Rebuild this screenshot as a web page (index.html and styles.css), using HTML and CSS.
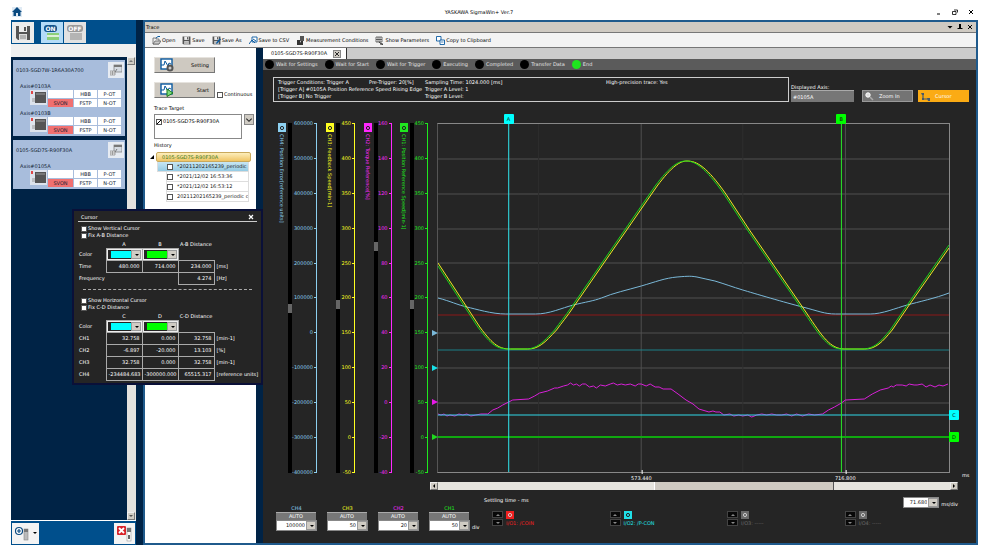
FILE: index.html
```html
<!DOCTYPE html>
<html lang="en">
<head>
  <meta charset="UTF-8" />
  <meta name="viewport" content="width=device-width, initial-scale=1.0" />
  <title>YASKAWA SigmaWin+ Ver.7</title>
  <link rel="stylesheet" href="styles.css">
</head>
<body>

  <!-- shared icons -->
  <svg class="defs" width="0" height="0">
    <symbol id="i-wave" viewBox="0 0 14 14">
      <rect x="1" y="1" width="11" height="10" fill="#fff" stroke="#0a5aa0" stroke-width="1.4"/>
      <path d="M1 7 L4 7 L5 3 L8 8 L9 5 L11 6" fill="none" stroke="#0a5aa0"/>
    </symbol>
    <symbol id="i-floppy" viewBox="0 0 16 16">
      <path d="M1 1 H15 V15 H3 L1 13 Z" fill="#555"/>
      <rect x="4" y="1" width="8" height="6" fill="#eee"/>
      <rect x="9" y="2" width="2" height="4" fill="#555"/>
      <rect x="4" y="9" width="8" height="6" fill="#ddd"/>
      <path d="M5 11 H11 M5 13 H11" stroke="#888"/>
    </symbol>
    <symbol id="i-eye" viewBox="0 0 8 8">
      <circle cx="4" cy="4" r="1.6" fill="none" stroke="currentColor"/>
    </symbol>
    <symbol id="i-motor" viewBox="0 0 17 15">
      <rect x="0" y="0" width="17" height="15" fill="#dde3ec"/>
      <rect x="1" y="1" width="2" height="3" fill="#e04848"/>
      <path d="M2 9 H6 M2 11 H6" stroke="#999"/>
      <rect x="5" y="2" width="11" height="11" fill="#555"/>
      <rect x="6" y="3" width="9" height="2" fill="#777"/>
    </symbol>
    <symbol id="i-props" viewBox="0 0 12 12">
      <rect x="4" y="1" width="8" height="7" fill="#d5dbe2" stroke="#777" stroke-width=".7"/>
      <path d="M4 2 H12" stroke="#777" stroke-width="2"/>
      <path d="M0 7 H5 V11 H0 Z M0 9 H5 M2.5 7 V11" fill="#eee" stroke="#888" stroke-width=".7"/>
      <path d="M5 8 L7 5" stroke="#777"/>
    </symbol>
  </svg>

  <header class="app-title">
    <svg class="home" viewBox="0 0 10 10"><path d="M5 0 L10 5 H8.500 V9 H6 V6 H4 V9 H1.500 V5 H0 Z" fill="#0a4a80"/></svg>
    <h1>YASKAWA SigmaWin+ Ver.7</h1>
    <div class="win-buttons">
      <button aria-label="Minimize"><svg viewBox="0 0 6 6"><path d="M1 5 H4" stroke="#000"/></svg></button>
      <button aria-label="Restore"><svg viewBox="0 0 6 6"><path d="M2 1 H5.500 V3.500 M.5 2.500 H4 V5.500 H.5 Z" fill="none" stroke="#000" stroke-width=".8"/></svg></button>
      <button aria-label="Close"><svg viewBox="0 0 6 6"><path d="M1 1 L5 5 M5 1 L1 5" stroke="#000"/></svg></button>
    </div>
  </header>

  <main class="app">

    <aside class="sidebar">
      <div class="side-tools">
        <button class="tile" aria-label="Save project"><svg viewBox="0 0 16 16"><use href="#i-floppy"/></svg></button>
        <button class="tile on"><span>ON</span><i></i></button>
        <button class="tile off"><span>OFF</span><i></i></button>
      </div>
      <div class="side-strip"></div>
      <div class="side-body">
        <div class="devices">
          <section class="device">
            <div class="device-head">
              <h2>0103-SGD7W-1R6A30A700</h2>
              <button aria-label="Properties"><svg viewBox="0 0 12 12"><use href="#i-props"/></svg></button>
            </div>
            <h3>Axis#0103A</h3>
            <div class="axis">
              <svg viewBox="0 0 17 15"><use href="#i-motor"/></svg>
              <span></span><span>HBB</span><span>P-OT</span>
              <span class="alarm">SVON</span><span>FSTP</span><span>N-OT</span>
            </div>
            <h3>Axis#0103B</h3>
            <div class="axis">
              <svg viewBox="0 0 17 15"><use href="#i-motor"/></svg>
              <span></span><span>HBB</span><span>P-OT</span>
              <span class="alarm">SVON</span><span>FSTP</span><span>N-OT</span>
            </div>
          </section>
          <section class="device">
            <div class="device-head">
              <h2>0105-SGD7S-R90F30A</h2>
              <button aria-label="Properties"><svg viewBox="0 0 12 12"><use href="#i-props"/></svg></button>
            </div>
            <h3>Axis#0105A</h3>
            <div class="axis">
              <svg viewBox="0 0 17 15"><use href="#i-motor"/></svg>
              <span></span><span>HBB</span><span>P-OT</span>
              <span class="alarm">SVON</span><span>FSTP</span><span>N-OT</span>
            </div>
          </section>
        </div>
        <div class="vscroll">
          <button aria-label="Scroll up"><svg viewBox="0 0 6 6"><path d="M1 4 L3 2 L5 4 Z" fill="#777"/></svg></button>
          <button aria-label="Scroll down"><svg viewBox="0 0 6 6"><path d="M1 2 L3 4 L5 2 Z" fill="#555"/></svg></button>
        </div>
      </div>
      <div class="side-foot">
        <button class="add" aria-label="Add device">
          <svg viewBox="0 0 27 21">
            <circle cx="7" cy="8" r="3.500" fill="#fff" stroke="#0a4a80" stroke-width="1.200"/>
            <path d="M7 6 V10 M5 8 H9" stroke="#0a4a80" stroke-width="1.200"/>
            <rect x="12" y="6" width="4" height="11" fill="#bbb" stroke="#888" stroke-width=".6"/>
            <rect x="12" y="6" width="4" height="3" fill="#777"/>
            <path d="M21 9 H25 L23 11 Z" fill="#000"/>
          </svg>
        </button>
        <button class="remove" aria-label="Remove device">
          <svg viewBox="0 0 21 21">
            <rect x="13" y="5" width="4" height="13" fill="#fff" stroke="#999" stroke-width=".6"/>
            <rect x="13" y="5" width="4" height="4" fill="#777"/>
            <path d="M15 12 V16" stroke="#000" stroke-width="1.200"/>
            <rect x="3" y="3" width="9" height="9" rx="1" fill="#d8232a"/>
            <path d="M5 5 L10 10 M10 5 L5 10" stroke="#fff" stroke-width="1.800"/>
          </svg>
        </button>
      </div>
    </aside>

    <section class="trace">
      <div class="trace-title">
        <h2>Trace</h2>
        <div class="win-buttons">
          <button aria-label="Window menu"><svg viewBox="0 0 6 6"><path d="M.5 2 H5.500 L3 4.500 Z"/></svg></button>
          <button aria-label="Pin"><svg viewBox="0 0 6 6"><path d="M2 0 H4 V4 H5.500 V5 H.5 V4 H2 Z"/></svg></button>
          <button aria-label="Close trace"><svg viewBox="0 0 6 6"><path d="M1 1 L5 5 M5 1 L1 5" stroke="#000"/></svg></button>
        </div>
      </div>

      <nav class="toolbar">
        <button><svg viewBox="0 0 9 9"><path d="M1 8 V2 H4 V3 H7 V8 Z" fill="#eee" stroke="#666" stroke-width=".8"/><path d="M1 8 L3 5 H9 L7 8 Z" fill="#ccc" stroke="#555" stroke-width=".7"/><path d="M4 2 L6 .5 H8" fill="none" stroke="#0a5aa0"/></svg>Open</button>
        <button><svg viewBox="0 0 16 16"><use href="#i-floppy"/></svg>Save</button>
        <button><svg viewBox="0 0 16 16"><use href="#i-floppy"/><path d="M8 11 L14 4 L16 6 L10 13 L7 14 Z" fill="#0a5aa0"/></svg>Save As</button>
        <button><svg viewBox="0 0 9 9"><path d="M3 1 H8 V6 H3 Z" fill="#fff" stroke="#0a5aa0" stroke-width=".9"/><path d="M0 8 L3 4 L6 7 M4 3 L7 5" fill="none" stroke="#0a5aa0"/></svg>Save to CSV</button>
        <button><svg viewBox="0 0 9 9"><path d="M4 0 H8 V5 H4 Z" fill="#555"/><path d="M1 4 H4 V9 H1 Z M5 5 H7 V9 H3 Z" fill="#333"/></svg>Measurement Conditions</button>
        <button><svg viewBox="0 0 9 9"><path d="M1 1 H7 V6 H1 Z M1 3.500 H7 M3 1 V6 M5 1 V6" fill="#fff" stroke="#333" stroke-width=".7"/><path d="M4 6 L8 9 M5 8 H8" stroke="#333"/></svg>Show Parameters</button>
        <button><svg viewBox="0 0 9 9"><path d="M.5 .5 H5 V5 H.5 Z" fill="#fff" stroke="#0a5aa0" stroke-width=".9"/><path d="M4 4 H8.500 V8.500 H4 Z" fill="#fff" stroke="#0a5aa0" stroke-width=".9"/><path d="M5 6 H7.500" stroke="#0a5aa0" stroke-width=".7"/></svg>Copy to Clipboard</button>
      </nav>

      <div class="trace-body">

        <div class="side-panel">
          <button class="big-btn">
            <svg viewBox="0 0 14 14"><use href="#i-wave"/><circle cx="10" cy="10" r="2.500" fill="#ccc" stroke="#555" stroke-width="2"/></svg>
            <span>Setting</span>
          </button>
          <div class="start-row">
            <button class="big-btn">
              <svg viewBox="0 0 14 14"><use href="#i-wave"/><path d="M7 6 L13 10 L7 13.500 Z" fill="#7ddc7d" stroke="#187a18"/></svg>
              <span>Start</span>
            </button>
            <label class="check"><input type="checkbox">Continuous</label>
          </div>
          <h3>Trace Target</h3>
          <div class="target-row">
            <div class="target-box"><label class="check"><input type="checkbox" checked>0105-SGD7S-R90F30A</label></div>
            <button class="drop" aria-label="Choose target"><svg viewBox="0 0 6 6"><path d="M1 2 L3 4 L5 2" fill="none" stroke="#222" stroke-width=".8"/></svg></button>
          </div>
          <h3>History</h3>
          <div class="tree">
            <svg class="expander" viewBox="0 0 4 4"><path d="M4 0 V4 H0 Z"/></svg>
            <div class="tree-root">0105-SGD7S-R90F30A</div>
            <ul>
              <li class="selected"><label class="check"><input type="checkbox">*20211202165239_periodic</label></li>
              <li><label class="check"><input type="checkbox">*2021/12/02 16:53:36</label></li>
              <li><label class="check"><input type="checkbox">*2021/12/02 16:53:12</label></li>
              <li><label class="check"><input type="checkbox">20211202165239_periodic c</label></li>
            </ul>
          </div>
        </div>

        <div class="viewer">
          <div class="tabs">
            <div class="tab">0105-SGD7S-R90F30A <button aria-label="Close tab"><svg viewBox="0 0 6 6"><path d="M1 1 L5 5 M5 1 L1 5" stroke="#000" stroke-width=".8"/></svg></button></div>
          </div>
          <ul class="steps">
            <li>Wait for Settings</li>
            <li>Wait for Start</li>
            <li>Wait for Trigger</li>
            <li>Executing</li>
            <li>Completed</li>
            <li>Transfer Data</li>
            <li class="active">End</li>
          </ul>

          <div class="info-row">
            <div class="conditions">
              <span>Trigger Conditions: Trigger A</span><span>Pre-Trigger: 20[%]</span><span>Sampling Time: 1024.000 [ms]</span><span>High-precision trace: Yes</span>
              <span class="wide">[Trigger A] #0105A Position Reference Speed Rising Edge</span><span class="level">Trigger A Level: 1</span>
              <span class="wide">[Trigger B] No Trigger</span><span class="level">Trigger B Level:</span>
            </div>
            <div class="field">
              <label for="axis">Displayed Axis:</label>
              <input id="axis" type="text" value="#0105A" readonly>
            </div>
            <button class="view-btn">
              <svg viewBox="0 0 9 9"><circle cx="3" cy="3" r="2.200" fill="#ddd" stroke="#fff"/><path d="M5 5 L8 8" stroke="#aaa" stroke-width="1.500"/></svg>Zoom In
            </button>
            <button class="view-btn active">
              <svg viewBox="0 0 9 9"><path d="M2 1 V7 H8" fill="none" stroke="#4a5a68" stroke-width="1.200"/><path d="M0 1 H3 V3 H1 Z M6 6 H9 V9 H7 Z M1 6 H3 V8 H1 Z" fill="#4a5a68"/></svg>Cursor
            </button>
          </div>

          <div class="chart">
            <div class="channel ch4">
              <div class="name"><button aria-label="Toggle CH4"><svg viewBox="0 0 8 8"><use href="#i-eye"/></svg></button><span>CH4: Position Error[reference units]</span></div>
              <input type="range" aria-label="CH4 position" value="53">
              <ol><li>600000</li><li>500000</li><li>400000</li><li>300000</li><li>200000</li><li>100000</li><li>0</li><li>-100000</li><li>-200000</li><li>-300000</li><li>-400000</li></ol>
            </div>
            <div class="channel ch3">
              <div class="name"><button aria-label="Toggle CH3"><svg viewBox="0 0 8 8"><use href="#i-eye"/></svg></button><span>CH3: Feedback Speed[min-1]</span></div>
              <input type="range" aria-label="CH3 position" value="52">
              <ol><li>450</li><li>400</li><li>350</li><li>300</li><li>250</li><li>200</li><li>150</li><li>100</li><li>50</li><li>0</li><li>-50</li></ol>
            </div>
            <div class="channel ch2">
              <div class="name"><button aria-label="Toggle CH2"><svg viewBox="0 0 8 8"><use href="#i-eye"/></svg></button><span>CH2: Torque Reference[%]</span></div>
              <input type="range" aria-label="CH2 position" value="35">
              <ol><li>160</li><li>140</li><li>120</li><li>100</li><li>80</li><li>60</li><li>40</li><li>20</li><li>0</li><li>-20</li><li>-40</li></ol>
            </div>
            <div class="channel ch1">
              <div class="name"><button aria-label="Toggle CH1"><svg viewBox="0 0 8 8"><use href="#i-eye"/></svg></button><span>CH1: Position Reference Speed[min-1]</span></div>
              <input type="range" aria-label="CH1 position" value="52">
              <ol><li>450</li><li>400</li><li>350</li><li>300</li><li>250</li><li>200</li><li>150</li><li>100</li><li>50</li><li>0</li><li>-50</li></ol>
            </div>

            <div class="plot">
              <svg class="curves" viewBox="0 0 513 348" preserveAspectRatio="none">
                <path class="grid" d="M0 35 H513 M0 70 H513 M0 105 H513 M0 139 H513 M0 174 H513 M0 209 H513 M0 244 H513 M0 279 H513 M204 0 V348 M409 0 V348"/>
                <path class="grid faint" d="M101 0 V348 M306 0 V348"/>
                <path class="io1" d="M0 191 H513"/>
                <path class="io2" d="M0 226 H513"/>
                <path class="s4" d="M0 174 C12 177 20 181 29 183 S54 190 68 190 H98 C112 190 124 184 136 181 S156 177 164 174 C176 169 190 166 204 162 S228 154 240 153 S254 152 260 153 S272 156 278 157 C288 160 296 163 306 166 S350 179 366 183 S388 190 399 190 H434 C446 190 460 184 471 181 S500 174 513 169"/>
                <path class="s2" d="M0 290 L3 291 L6 290 L9 292 L12 291 L17 292 L21 290 L25 291 L29 290 L33 292 L38 291 L43 290 L50 290 L55 286 L60 284 L65 281 L71 278 L75 276 L91 275 L97 272 L102 269 L110 267 L117 264 L120 264 L126 262 L130 261 L133 259 L136 261 L139 260 L142 262 L145 260 L148 260 L152 263 L156 262 L159 264 L163 261 L168 262 L173 260 L176 259 L180 261 L184 260 L188 261 L193 260 L198 262 L201 260 L204 260 L209 262 L213 260 L218 263 L222 263 L226 265 L234 265 L241 270 L249 276 L256 280 L262 285 L272 288 L276 287 L279 288 L283 288 L287 291 L293 290 L297 292 L302 291 L306 292 L311 291 L315 293 L320 291 L325 290 L330 291 L335 290 L340 291 L345 291 L350 290 L355 292 L360 290 L366 292 L372 290 L378 291 L386 290 L392 286 L398 283 L405 279 L409 276 L428 275 L436 270 L444 266 L452 264 L455 262 L457 263 L460 261 L466 261 L470 262 L473 260 L478 261 L481 261 L486 260 L490 263 L494 261 L499 263 L503 261 L507 262 L512 260"/>
                <path class="s3" d="M0 139 L42 203 C56 222 62 225 73 225 H90 C101 225 107 219 119 206 C124 199 130 192 136 183 L204 85 L220 62 C235 42 243 37 250 37 C260 37 270 43 289 70 L312 105 L370 189 C386 213 394 225 408 225 H428 C440 225 446 218 456 206 L471 184 L513 124"/>
                <path class="s1" d="M0 142 L40 203 C54 222 60 225 71 225 H88 C99 225 105 219 117 206 C122 199 128 192 134 183 L202 85 L218 62 C233 42 241 37 249 37 C258 37 268 43 287 70 L310 105 L368 189 C384 213 392 225 406 225 H426 C438 225 444 218 454 206 L469 184 L513 121"/>
                <path class="cur-c" d="M0 291 H513"/>
                <path class="cur-d" d="M0 313 H513"/>
                <path class="cur-a" d="M71 0 V348"/>
                <path class="cur-b" d="M405 0 V348"/>
              </svg>
              <!-- cursor handles -->
              <span class="tag top a" style="left:13.8%">A</span>
              <span class="tag top b" style="left:78.9%">B</span>
              <span class="tag right a" style="top:83.5%">C</span>
              <span class="tag right b" style="top:90%">D</span>
              <i class="zero z4" style="top:60%"></i>
              <i class="zero zc" style="top:70%"></i>
              <i class="zero z2" style="top:80%"></i>
              <i class="zero z1" style="top:90%"></i>
              <span class="time" style="left:39.8%">573.440</span>
              <span class="time" style="left:79.7%">716.800</span>
              <span class="unit">ms</span>
            </div>
          </div>

          <div class="hscroll">
            <button aria-label="Scroll left"><svg viewBox="0 0 6 6"><path d="M4 1 V5 L2 3 Z"/></svg></button>
            <div class="track"><div class="thumb"></div></div>
            <button aria-label="Scroll right"><svg viewBox="0 0 6 6"><path d="M2 1 V5 L4 3 Z"/></svg></button>
          </div>

          <div class="controls">
            <div class="scales">
              <div class="scale ch4"><label for="d4">CH4</label><button>AUTO</button><div class="combo"><select id="d4"><option>100000</option></select></div></div>
              <div class="scale ch3"><label for="d3">CH3</label><button>AUTO</button><div class="combo"><select id="d3"><option>50</option></select></div></div>
              <div class="scale ch2"><label for="d2">CH2</label><button>AUTO</button><div class="combo"><select id="d2"><option>20</option></select></div></div>
              <div class="scale ch1"><label for="d1">CH1</label><button>AUTO</button><div class="combo"><select id="d1"><option>50</option></select></div></div>
              <span class="div">div</span>
            </div>
            <div class="right-controls">
              <div class="settling">
                <span>Settling time - ms</span>
                <div class="time-div"><div class="combo"><select id="td"><option>71.680</option></select></div><label for="td">ms/div</label></div>
              </div>
              <div class="ios">
                <div class="io one">
                  <button class="up" aria-label="I/O1 up"></button><button class="eye" aria-label="Toggle I/O1"><svg viewBox="0 0 8 8"><use href="#i-eye"/></svg></button>
                  <button class="down" aria-label="I/O1 down"></button><span>I/O1: /COIN</span>
                </div>
                <div class="io two">
                  <button class="up" aria-label="I/O2 up"></button><button class="eye" aria-label="Toggle I/O2"><svg viewBox="0 0 8 8"><use href="#i-eye"/></svg></button>
                  <button class="down" aria-label="I/O2 down"></button><span>I/O2: /P-CON</span>
                </div>
                <div class="io">
                  <button class="up" aria-label="I/O3 up"></button><button class="eye" aria-label="Toggle I/O3"><svg viewBox="0 0 8 8"><use href="#i-eye"/></svg></button>
                  <button class="down" aria-label="I/O3 down"></button><span>I/O3: -----</span>
                </div>
                <div class="io">
                  <button class="up" aria-label="I/O4 up"></button><button class="eye" aria-label="Toggle I/O4"><svg viewBox="0 0 8 8"><use href="#i-eye"/></svg></button>
                  <button class="down" aria-label="I/O4 down"></button><span>I/O4: -----</span>
                </div>
              </div>
            </div>
          </div>
        </div>
      </div>
    </section>
  </main>

  <div class="dialog" role="dialog" aria-label="Cursor">
    <div class="dialog-title"><h2>Cursor</h2><button aria-label="Close cursor window"><svg viewBox="0 0 6 6"><path d="M1 1 L5 5 M5 1 L1 5" stroke="#fff" stroke-width="1.200"/></svg></button></div>
    <div class="checks">
      <label class="check"><input type="checkbox">Show Vertical Cursor</label>
      <label class="check"><input type="checkbox">Fix A-B Distance</label>
    </div>
    <table>
      <tr class="head"><td></td><th>A</th><th>B</th><th>A-B Distance</th><td></td></tr>
      <tr class="color"><th>Color</th><td><div class="combo"><select class="cyan" aria-label="Cursor A color"><option></option></select></div></td><td><div class="combo"><select class="green" aria-label="Cursor B color"><option></option></select></div></td><td class="none"></td><td></td></tr>
      <tr><th>Time</th><td>480.000</td><td>714.000</td><td>234.000</td><td>[ms]</td></tr>
      <tr><th colspan="3">Frequency</th><td>4.274</td><td>[Hz]</td></tr>
    </table>
    <hr>
    <div class="checks">
      <label class="check"><input type="checkbox">Show Horizontal Cursor</label>
      <label class="check"><input type="checkbox">Fix C-D Distance</label>
    </div>
    <table>
      <tr class="head"><td></td><th>C</th><th>D</th><th>C-D Distance</th><td></td></tr>
      <tr class="color"><th>Color</th><td><div class="combo"><select class="cyan" aria-label="Cursor C color"><option></option></select></div></td><td><div class="combo"><select class="green" aria-label="Cursor D color"><option></option></select></div></td><td class="none"></td><td></td></tr>
      <tr><th>CH1</th><td>32.758</td><td>0.000</td><td>32.758</td><td>[min-1]</td></tr>
      <tr><th>CH2</th><td>-6.897</td><td>-20.000</td><td>13.103</td><td>[%]</td></tr>
      <tr><th>CH3</th><td>32.758</td><td>0.000</td><td>32.758</td><td>[min-1]</td></tr>
      <tr><th>CH4</th><td>-234484.683</td><td>-300000.000</td><td>65515.317</td><td>[reference units]</td></tr>
    </table>
  </div>

</body>
</html>
```
FILE: styles.css
```css
* {
  box-sizing: border-box;
}
body {
  margin: 0;
  min-height: 100vh;
  display: flex;
  flex-direction: column;
  background: #fff;
  color: #000;
  font: 5px/7px "DejaVu Sans", "Liberation Sans", sans-serif;
}
h1, h2, h3, ul, ol {
  margin: 0;
  padding: 0;
  font: inherit;
  list-style: none;
}
button, input, select {
  margin: 0;
  padding: 0;
  border: 0;
  border-radius: 0;
  font: inherit;
  color: inherit;
  background: none;
}
svg {
  display: block;
}
.defs {
  position: absolute;
}

/* title bar */
.app-title {
  display: flex;
  align-items: center;
  height: 20px;
  padding: 4px 4px 0 1px;
  margin: 0 11px;
}
.home {
  width: 10px;
  height: 10px;
  background: #dfeaf4;
}
.app-title h1 {
  flex: 1;
  padding-right: 8px;
  text-align: center;
}
.win-buttons {
  display: flex;
  gap: 10px;
}
.win-buttons svg {
  width: 6px;
  height: 6px;
}
.app-title h1 {
  padding: 0;
}

.app {
  flex: 1;
  display: flex;
  margin: 0 11px 9px;
  background: #002346;
}

/* device list */
.sidebar {
  display: flex;
  flex-direction: column;
  width: 125px;
  margin-right: 7px;
  color: #123;
}
.side-tools, .side-foot {
  display: flex;
  height: 24px;
  padding: 2px 1px;
  background: #004f8c;
}
.tile {
  width: 22px;
  height: 21px;
  padding: 2px;
  background: #ececec;
}
.tile svg {
  width: 16px;
  height: 16px;
  margin: auto;
}
.tile span {
  display: block;
  width: 13px;
  margin: 0 0 1px 1px;
  border-radius: 3px;
  background: #14548c;
  color: #fff;
  font-size: 6px;
  font-weight: bold;
  line-height: 7px;
}
.tile i {
  display: block;
  width: 12px;
  height: 7px;
  margin-left: 4px;
  background: linear-gradient(#8ccf7a 2px, #dff0d8 2px 4px, #8ccf7a 4px);
}
.tile.on {
  margin-left: 7px;
  background: #b5dcf8;
}
.tile.off {
  margin-left: 1px;
  background: #e2e2e2;
}
.tile.off span {
  width: 16px;
  background: #999;
}
.tile.off i {
  background: #b4b4b4;
}
.side-strip {
  height: 13px;
  background: #f0f0f0;
}
.side-body {
  flex: 1;
  display: flex;
  border-bottom: 1px solid #fff;
}
.devices {
  flex: 1;
  padding: 3px 2px;
}
.device {
  margin-bottom: 4px;
  padding: 2px 1px 2px 3px;
  background: #a8bddc;
}
.device-head {
  display: flex;
  justify-content: space-between;
  align-items: center;
  height: 16px;
}
.device-head + h3 {
  margin-top: 5px;
}
.device-head button {
  width: 16px;
  height: 16px;
  padding: 2px;
  background: #e6ebf2;
}
.device h3 {
  margin-left: 4px;
}
.axis {
  display: grid;
  grid-template-columns: 17px 25px 23px 23px;
  grid-auto-rows: 8px;
  gap: 1px;
  justify-content: end;
  margin: 0 3px 3px 0;
  line-height: 8px;
  text-align: center;
}
.axis:last-child {
  margin-bottom: 0;
}
.axis svg {
  grid-row: span 2;
  width: 17px;
  height: 15px;
}
.axis span {
  background: #fff;
}
.axis .alarm {
  background: #f07070;
}
.vscroll {
  display: flex;
  flex-direction: column;
  justify-content: space-between;
  width: 9px;
  background: #e4e2de;
}
.vscroll button, .hscroll button {
  width: 8px;
  height: 8px;
  background: #d0ccc4;
  border: 1px solid;
  border-color: #eee #777 #777 #eee;
}
.side-foot {
  justify-content: space-between;
}
.side-foot button {
  height: 21px;
  background: #f4f4f4;
}
.side-foot svg {
  height: 21px;
}
.add {
  width: 27px;
}
.remove {
  width: 21px;
}

/* trace window */
.trace {
  flex: 1;
  display: flex;
  flex-direction: column;
  min-width: 0;
  border: 2px solid #1f5a8c;
}
.trace-title {
  display: flex;
  justify-content: space-between;
  align-items: center;
  height: 10px;
  padding: 0 3px 0 1px;
  background: #cfcac2;
}
.trace-title .win-buttons {
  gap: 4px;
}
.toolbar {
  display: flex;
  align-items: center;
  gap: 7px;
  height: 16px;
  padding: 0 7px;
  background: #f3f3f3;
  border-top: 1px solid #777;
  border-bottom: 1px solid #777;
}
.toolbar button {
  display: flex;
  align-items: center;
  gap: 1px;
  white-space: nowrap;
}
.toolbar svg {
  width: 9px;
  height: 9px;
}
.trace-body {
  flex: 1;
  display: flex;
  gap: 7px;
}
.side-panel {
  width: 111px;
  padding: 9px 2px 0 9px;
  background: #fff;
}
.big-btn {
  display: flex;
  align-items: center;
  width: 61px;
  height: 16px;
  padding: 0 5px;
  background: #cec9c1;
  border: 1px solid;
  border-color: #e6e3de #777 #777 #e6e3de;
}
.big-btn svg {
  width: 14px;
  height: 14px;
}
.big-btn span {
  flex: 1;
  text-align: right;
}
.start-row {
  display: flex;
  align-items: flex-end;
  gap: 2px;
  margin: 9px 0 7px;
}
.check {
  display: flex;
  align-items: center;
  gap: 1px;
  white-space: nowrap;
}
.check input {
  appearance: none;
  flex: none;
  width: 6px;
  height: 6px;
  background: #fff;
  border: 1px solid #555;
}
.check input:checked {
  background: #fff linear-gradient(135deg, transparent 40%, #000 40% 60%, transparent 60%);
}
.target-row {
  display: flex;
  gap: 2px;
  margin: 2px 0 3px;
}
.target-box {
  width: 88px;
  height: 25px;
  padding: 3px 1px;
  border: 1px solid #888;
}
.drop {
  width: 10px;
  height: 11px;
  background: #d0ccc4;
  border: 1px solid #888;
}
.tree {
  position: relative;
  margin: 3px 3px 0 2px;
  color: #222;
}
.expander {
  position: absolute;
  left: -6px;
  top: 3px;
  width: 4px;
  height: 4px;
}
.tree-root {
  height: 10px;
  padding-left: 5px;
  line-height: 8px;
  color: #3a7a1c;
  background: linear-gradient(#fdeebb, #f0c565);
  border: 1px solid #c9a95c;
  border-radius: 2px;
}
.tree li {
  height: 10px;
  margin: 0 2px 0 10px;
  overflow: hidden;
  border: 1px solid #ddd;
  border-top: 0;
}
.tree li .check {
  gap: 4px;
  height: 9px;
}
.tree li.selected {
  margin-left: 1px;
  padding-left: 9px;
  background: linear-gradient(#c8e6f4, #94cbe4);
}

/* viewer */
.viewer {
  flex: 1;
  display: flex;
  flex-direction: column;
  min-width: 0;
  background: #252525;
  color: #fff;
}
.tabs {
  height: 11px;
  background: #ccc;
}
.tab {
  display: flex;
  align-items: center;
  justify-content: space-between;
  width: 84px;
  height: 11px;
  padding: 0 5px 0 8px;
  background: #fff;
  color: #111;
  border-right: 1px solid #333;
}
.tab button {
  width: 8px;
  height: 8px;
  background: #d0ccc4;
  border: 1px solid #888;
}
.steps {
  display: flex;
  gap: 7px;
  height: 11px;
  padding-left: 2px;
  line-height: 11px;
  background: #5b5b5b;
  color: #e4e4e4;
}
.steps li {
  display: flex;
  align-items: center;
  gap: 2px;
}
.steps li::before {
  content: "";
  width: 9px;
  height: 9px;
  border-radius: 50%;
  background: #000;
}
.steps .active::before {
  background: #1ee61e;
}
.info-row {
  display: flex;
  align-items: flex-end;
  margin: 7px 7px 0 10px;
}
.conditions {
  flex: 1;
  display: grid;
  grid-template-columns: 91px 56px 181px 1fr;
  padding: 1px 4px;
  border: 1px solid #ccc;
  white-space: nowrap;
}
.conditions .wide {
  grid-column: span 2;
}
.conditions .level {
  grid-column: span 2;
}
.field {
  width: 63px;
  margin: 0 8px 0 2px;
}
.field label {
  display: block;
  line-height: 6px;
}
.field input {
  display: block;
  width: 100%;
  height: 12px;
  padding: 0 2px;
  background: #777;
  border-top: 1px solid #aaa;
}
.view-btn {
  display: flex;
  align-items: center;
  gap: 5px;
  width: 51px;
  height: 12px;
  padding: 0 2px;
  background: #747474;
  border: 1px solid #999;
}
.view-btn svg {
  width: 9px;
  height: 9px;
}
.view-btn.active {
  margin-left: 5px;
  background: #fbab14;
  border-color: #fbab14;
}

/* chart */
.ch1 { color: #1fe81f; }
.ch2 { color: #ff28ff; }
.ch3 { color: #ffff20; }
.ch4 { color: #8cd0f0; }

.chart {
  flex: 1;
  display: grid;
  grid-template-columns: 39px 29px 27px 28px 1fr;
  column-gap: 9px;
  min-height: 240px;
  margin: 21px 26px 9px 15px;
}
.channel {
  display: flex;
  contain: size;
}
.name {
  display: flex;
  flex-direction: column;
  width: 8px;
}
.name button {
  width: 8px;
  height: 9px;
  background: currentColor;
}
.name svg {
  width: 8px;
  height: 8px;
  color: #222;
}
.name span {
  margin-top: 2px;
  writing-mode: vertical-rl;
  line-height: 8px;
  white-space: nowrap;
}
.channel input {
  appearance: none;
  writing-mode: vertical-lr;
  width: 4px;
  height: 100%;
  margin-left: 2px;
  background: #000;
}
.channel input::-webkit-slider-thumb {
  appearance: none;
  width: 4px;
  height: 9px;
  background: #666;
}
.channel ol {
  flex: 1;
  display: flex;
  flex-direction: column;
  justify-content: space-between;
  text-align: right;
  border-right: 1px solid;
}
.channel li {
  display: flex;
  justify-content: flex-end;
  gap: 1px;
  height: 1px;
  line-height: 1px;
}
.channel li::after {
  content: "";
  width: 2px;
  height: 1px;
  background: currentColor;
}
.plot {
  position: relative;
  border: 1px solid #888;
  border-left-color: #555;
}
.curves {
  position: absolute;
  width: 100%;
  height: 100%;
}
.curves path {
  fill: none;
  stroke-width: 1px;
  vector-effect: non-scaling-stroke;
}
.curves .grid { stroke: #505050; }
.curves .faint { stroke: #2e2e2e; }
.curves .io1 { stroke: #8c1818; }
.curves .io2 { stroke: #1c8088; }
.curves .s1 { stroke: #18d818; }
.curves .s2 { stroke: #d820d8; }
.curves .s3 { stroke: #f0f020; }
.curves .s4 { stroke: #7ab8d8; }
.curves .cur-a { stroke: #30e8f0; }
.curves .cur-b { stroke: #28e828; }
.curves .cur-c { stroke: #30d8e8; }
.curves .cur-d {
  stroke: #10a810;
  stroke-width: 2px;
}
.tag {
  position: absolute;
  width: 10px;
  height: 10px;
  border-radius: 1px;
  color: #111;
  line-height: 10px;
  text-align: center;
}
.tag.top {
  bottom: 100%;
  margin-left: -5px;
}
.tag.right {
  left: 100%;
  margin-top: -5px;
}
.tag.a { background: #00ffff; }
.tag.b { background: #00ff00; }
.zero {
  position: absolute;
  right: 100%;
  margin-top: -3px;
  border: 3px solid transparent;
  border-left: 6px solid;
  border-right: 0;
}
.z4 { color: #7ab8d8; }
.zc { color: #18e0e8; }
.z2 { color: #e619e6; }
.z1 { color: #1fd81f; }
.time {
  position: absolute;
  top: 100%;
  padding-top: 3px;
  transform: translateX(-50%);
}
.time::before {
  content: "";
  position: absolute;
  left: 50%;
  top: -2px;
  height: 4px;
  border-left: 1px solid #fff;
}
.unit {
  position: absolute;
  left: 100%;
  top: 100%;
  margin-left: 13px;
}
.hscroll {
  display: flex;
  height: 8px;
  margin: 0 18px 0 167px;
}
.track {
  flex: 1;
  padding: 0 22% 0 41%;
  background: #e6e4de;
}
.thumb {
  height: 8px;
  background: #cfcac2;
  border-left: 1px solid #fff;
  border-right: 1px solid #555;
}

/* controls under the chart */
.controls {
  display: flex;
  align-items: flex-end;
  padding: 7px 14px 12px 13px;
}
.scales {
  display: flex;
  align-items: flex-end;
  gap: 10px;
  width: 201px;
}
.scale {
  flex: none;
  width: 41px;
  text-align: center;
}
.scale label {
  display: block;
  line-height: 8px;
}
.scale button {
  display: block;
  width: 40px;
  height: 8px;
  line-height: 7px;
  background: #777;
  border-top: 1px solid #aaa;
  color: #fff;
}
.combo {
  position: relative;
}
.combo select {
  appearance: none;
  display: block;
  width: 100%;
  height: 11px;
  padding: 0 11px 0 2px;
  background: #fff;
  border: 1px solid #888;
  color: #111;
  text-align-last: right;
}
.combo::after {
  content: "";
  position: absolute;
  top: 1px;
  right: 1px;
  bottom: 1px;
  width: 8px;
  background: #d0ccc4;
  border: 1px solid #999;
  pointer-events: none;
}
.combo::before {
  content: "";
  position: absolute;
  z-index: 1;
  right: 3px;
  top: 5px;
  border: 2px solid transparent;
  border-top-color: #000;
  border-bottom: 0;
  pointer-events: none;
}
.div {
  margin-left: -8px;
}
.right-controls {
  flex: 1;
  margin-left: 7px;
}
.settling, .time-div {
  display: flex;
  justify-content: space-between;
}
.time-div {
  gap: 2px;
  align-items: flex-end;
  margin-right: 4px;
}
.time-div .combo {
  width: 36px;
}
.ios {
  display: grid;
  grid-template-columns: repeat(4, 1fr);
  margin: 3px 0 4px 8px;
}
.io {
  display: grid;
  grid-template-columns: 11px 1fr;
  grid-auto-rows: 8px;
  column-gap: 3px;
  color: #6a6a6a;
  line-height: 8px;
}
.up, .down {
  display: grid;
  place-items: center;
  height: 7px;
  background: #080808;
  border: 1px solid #444;
}
.up::before, .down::before {
  content: "";
  border: 2px solid transparent;
  border-top: 0;
  border-bottom-color: #888;
}
.down::before {
  transform: rotate(180deg);
}
.eye {
  width: 8px;
  height: 8px;
  background: currentColor;
}
.eye svg {
  color: #ccc;
}
.io.one { color: #f02020; }
.io.two { color: #20e0e8; }
.io.two svg { color: #222; }

/* floating cursor window */
.dialog {
  position: absolute;
  left: 72px;
  top: 209px;
  width: 191px;
  padding: 2px 4px;
  background: #252525;
  border: 2px solid #0a1038;
  color: #fff;
}
.dialog-title {
  display: flex;
  justify-content: space-between;
  align-items: center;
  height: 9px;
  padding: 0 3px;
  border-bottom: 1px solid #ccc;
}
.dialog-title svg {
  width: 6px;
  height: 6px;
}
.checks {
  margin: 3px 0 2px 3px;
}
.checks .check {
  height: 7px;
}
.dialog table {
  border-collapse: collapse;
  table-layout: fixed;
  width: 100%;
}
.dialog td, .dialog th {
  width: 36px;
  height: 12px;
  padding: 0 2px;
  font-weight: normal;
  text-align: right;
  border: 1px solid #aaa;
  white-space: nowrap;
}
.dialog td:first-child, .dialog th:first-child {
  width: 28px;
  padding: 0 1px;
  text-align: left;
  border: 0;
}
.dialog td:last-child {
  width: 46px;
  text-align: left;
  border: 0;
}
.dialog .head th, .dialog .head td {
  height: 7px;
  padding: 0;
  text-align: center;
  border: 0;
}
.dialog .color td {
  padding: 0;
}
.dialog .color .none {
  border: 0;
}
.combo .cyan, .combo .green {
  border-color: #eee;
  background: linear-gradient(#00ffff, #00ffff) 3px 1px / 21px 7px no-repeat #252525;
}
.combo .green {
  background-image: linear-gradient(#00ff00, #00ff00);
}
.dialog hr {
  margin: 4px 5px 0;
  border: 0;
  border-top: 1px dashed #aaa;
}
.dialog hr + .checks {
  margin-top: 7px;
}
```
